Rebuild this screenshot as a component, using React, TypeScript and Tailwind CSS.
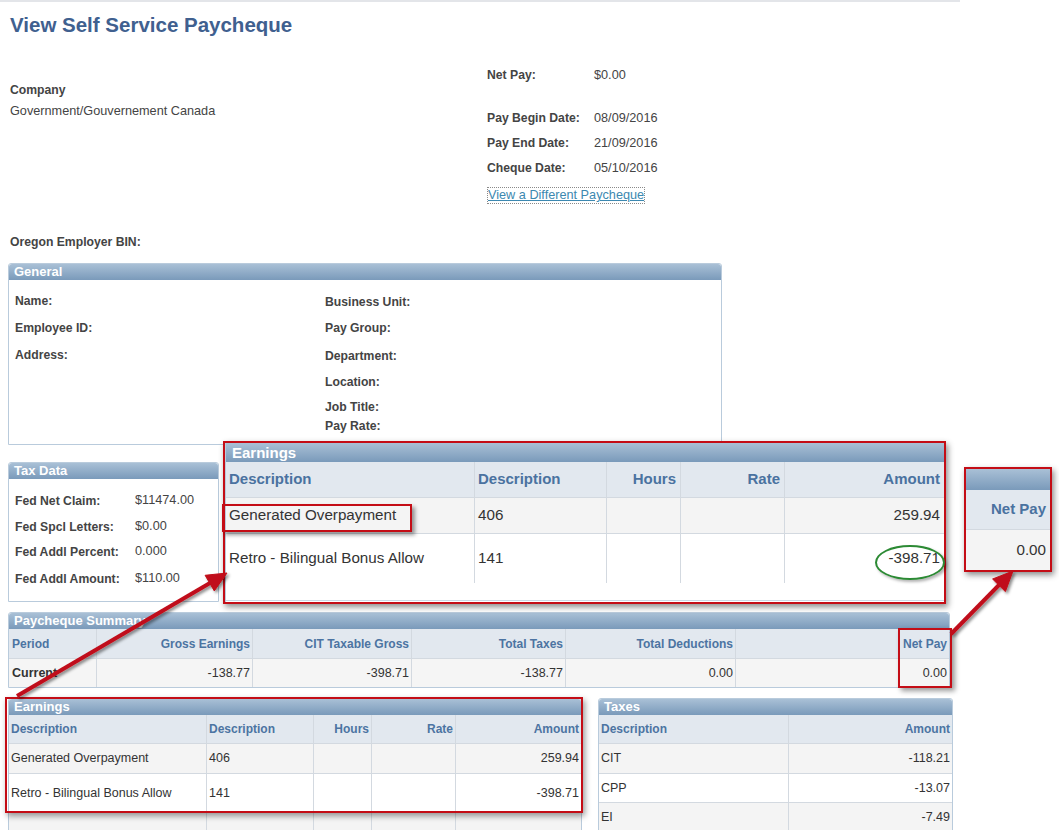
import React from "react";

type Col = { w: string; r?: boolean };

const HDR = "bg-linear-to-b from-[#a9c0d6] to-[#7a9aba] text-white font-bold";

function BoxHeader({ title }: { title: string }) {
  return (
    <div className={`h-[16px] rounded-t-[3px] pl-[5px] text-[13px] leading-[16px] ${HDR}`}>{title}</div>
  );
}

function GridRow({
  cols,
  cells,
  rowCls,
  cellCls,
  padL,
  padR,
}: {
  cols: Col[];
  cells: React.ReactNode[];
  rowCls: string;
  cellCls: string;
  padL: string;
  padR: string;
}) {
  return (
    <div className={`flex ${rowCls}`}>
      {cols.map((c, i) => (
        <div
          key={i}
          className={`flex h-full items-center whitespace-nowrap ${c.w} ${
            i < cols.length - 1 ? "border-r border-[#d3d9e0]" : ""
          } ${c.r ? `justify-end ${padR}` : padL} ${cellCls}`}
        >
          {cells[i]}
        </div>
      ))}
    </div>
  );
}

function InfoRow({ label, value, cls }: { label: string; value: string; cls?: string }) {
  return (
    <div className={`flex h-[25px] items-center ${cls ?? ""}`}>
      <div className="w-[107px] text-[12.2px] font-bold text-[#444]">{label}</div>
      <div className="text-[12.7px] text-[#444]">{value}</div>
    </div>
  );
}

function Lbl({ text, cls }: { text: string; cls: string }) {
  return <div className={`h-[18px] text-[12.2px] font-bold leading-[18px] text-[#444] ${cls}`}>{text}</div>;
}

function TaxRow({ label, value, cls }: { label: string; value: string; cls: string }) {
  return (
    <div className={`flex h-[18px] items-center ${cls}`}>
      <div className="w-[126px] pl-[6px] text-[12.2px] font-bold text-[#444]">{label}</div>
      <div className="text-[12.7px] text-[#444]">{value}</div>
    </div>
  );
}

const sumCols: Col[] = [
  { w: "w-[88px]" },
  { w: "w-[156px]", r: true },
  { w: "w-[159px]", r: true },
  { w: "w-[154px]", r: true },
  { w: "w-[170px]", r: true },
  { w: "flex-1", r: true },
];

const earnCols: Col[] = [
  { w: "w-[198px]" },
  { w: "w-[107px]" },
  { w: "w-[58px]", r: true },
  { w: "w-[84px]", r: true },
  { w: "flex-1", r: true },
];

const bigCols: Col[] = [
  { w: "w-[249px]" },
  { w: "w-[132px]" },
  { w: "w-[74px]", r: true },
  { w: "w-[104px]", r: true },
  { w: "flex-1", r: true },
];

const taxCols: Col[] = [{ w: "w-[190px]" }, { w: "flex-1", r: true }];

export default function App() {
  return (
    <div className="relative h-[830px] w-[1059px] overflow-hidden bg-white font-['Liberation_Sans',Arial,sans-serif] text-[#333]">
      <div className="h-[2px] w-[960px] bg-[#e3e5e9]" />
      <h1 className="ml-[10px] mt-[11px] h-[24px] text-[20.5px] font-bold leading-[24px] text-[#40608f]">
        View Self Service Paycheque
      </h1>

      <div className="flex">
        <div className="ml-[10px] w-[477px]">
          <div className="mt-[43px] h-[20px] text-[12.2px] font-bold leading-[20px] text-[#444]">Company</div>
          <div className="mt-[1px] h-[20px] text-[12.7px] leading-[20px] text-[#444]">
            Government/Gouvernement Canada
          </div>
        </div>
        <div>
          <InfoRow label="Net Pay:" value="$0.00" cls="mt-[26px]" />
          <InfoRow label="Pay Begin Date:" value="08/09/2016" cls="mt-[18px]" />
          <InfoRow label="Pay End Date:" value="21/09/2016" />
          <InfoRow label="Cheque Date:" value="05/10/2016" />
          <div className="mt-[2px] flex h-[25px] items-center">
            <span className="border border-dotted border-[#8a8a8a] text-[12.7px] leading-[15px] text-[#3c88b0] underline decoration-[#3c88b0]">
              View a Different Paycheque
            </span>
          </div>
        </div>
      </div>

      <div className="ml-[10px] mt-[24px] h-[20px] text-[12.2px] font-bold leading-[20px] text-[#444]">
        Oregon Employer BIN:
      </div>

      <div className="ml-[8px] mt-[11px] h-[182px] w-[714px] rounded-t-[3px] border border-[#b9cbdc]">
        <BoxHeader title="General" />
        <div className="flex">
          <div className="w-[310px] pl-[6px]">
            <Lbl text="Name:" cls="mt-[12px]" />
            <Lbl text="Employee ID:" cls="mt-[9px]" />
            <Lbl text="Address:" cls="mt-[9px]" />
          </div>
          <div className="pl-[6px]">
            <Lbl text="Business Unit:" cls="mt-[13px]" />
            <Lbl text="Pay Group:" cls="mt-[8px]" />
            <Lbl text="Department:" cls="mt-[10px]" />
            <Lbl text="Location:" cls="mt-[8px]" />
            <Lbl text="Job Title:" cls="mt-[7px]" />
            <Lbl text="Pay Rate:" cls="mt-[1px]" />
          </div>
        </div>
      </div>

      <div className="ml-[8px] mt-[17px] h-[140px] w-[211px] rounded-t-[3px] border border-[#b9cbdc]">
        <BoxHeader title="Tax Data" />
        <TaxRow label="Fed Net Claim:" value="$11474.00" cls="mt-[13px]" />
        <TaxRow label="Fed Spcl Letters:" value="$0.00" cls="mt-[8px]" />
        <TaxRow label="Fed Addl Percent:" value="0.000" cls="mt-[7px]" />
        <TaxRow label="Fed Addl Amount:" value="$110.00" cls="mt-[9px]" />
      </div>

      <div className="ml-[8px] mt-[10px] w-[942px] rounded-t-[3px] border border-[#b9cbdc]">
        <BoxHeader title="Paycheque Summary" />
        <GridRow
          cols={sumCols}
          cells={["Period", "Gross Earnings", "CIT Taxable Gross", "Total Taxes", "Total Deductions", "Net Pay"]}
          rowCls="h-[30px] border-b border-[#d3d9e0] bg-[#e2e8ef]"
          cellCls="text-[12px] font-bold text-[#4c74a2]"
          padL="pl-[3px]"
          padR="pr-[2px]"
        />
        <GridRow
          cols={sumCols}
          cells={[
            <span className="font-bold">Current</span>,
            "-138.77",
            "-398.71",
            "-138.77",
            "0.00",
            "0.00",
          ]}
          rowCls="h-[28px] bg-[#f5f5f5]"
          cellCls="text-[12.5px] text-[#333]"
          padL="pl-[3px]"
          padR="pr-[2px]"
        />
      </div>

      <div className="mt-[10px] flex items-start">
        <div className="ml-[8px] w-[574px] rounded-t-[3px] border border-[#b9cbdc]">
          <BoxHeader title="Earnings" />
          <GridRow
            cols={earnCols}
            cells={["Description", "Description", "Hours", "Rate", "Amount"]}
            rowCls="h-[29px] border-b border-[#d3d9e0] bg-[#e2e8ef]"
            cellCls="text-[12px] font-bold text-[#4c74a2]"
            padL="pl-[2px]"
            padR="pr-[2px]"
          />
          <GridRow
            cols={earnCols}
            cells={["Generated Overpayment", "406", "", "", "259.94"]}
            rowCls="h-[30px] border-b border-[#d3d9e0] bg-[#f4f4f4]"
            cellCls="text-[12.5px] text-[#333]"
            padL="pl-[2px]"
            padR="pr-[2px]"
          />
          <GridRow
            cols={earnCols}
            cells={["Retro - Bilingual Bonus Allow", "141", "", "", "-398.71"]}
            rowCls="h-[39px] border-b border-[#d3d9e0] bg-white"
            cellCls="text-[12.5px] text-[#333]"
            padL="pl-[2px]"
            padR="pr-[2px]"
          />
          <GridRow
            cols={earnCols}
            cells={["", "", "", "", ""]}
            rowCls="h-[30px] bg-[#f4f4f4]"
            cellCls="text-[12.5px]"
            padL="pl-[2px]"
            padR="pr-[2px]"
          />
        </div>

        <div className="ml-[16px] w-[355px] rounded-t-[3px] border border-[#b9cbdc]">
          <BoxHeader title="Taxes" />
          <GridRow
            cols={taxCols}
            cells={["Description", "Amount"]}
            rowCls="h-[29px] border-b border-[#d3d9e0] bg-[#e2e8ef]"
            cellCls="text-[12px] font-bold text-[#4c74a2]"
            padL="pl-[2px]"
            padR="pr-[2px]"
          />
          <GridRow
            cols={taxCols}
            cells={["CIT", "-118.21"]}
            rowCls="h-[30px] border-b border-[#d3d9e0] bg-[#f4f4f4]"
            cellCls="text-[12.5px] text-[#333]"
            padL="pl-[2px]"
            padR="pr-[2px]"
          />
          <GridRow
            cols={taxCols}
            cells={["CPP", "-13.07"]}
            rowCls="h-[29px] border-b border-[#d3d9e0] bg-white"
            cellCls="text-[12.5px] text-[#333]"
            padL="pl-[2px]"
            padR="pr-[2px]"
          />
          <GridRow
            cols={taxCols}
            cells={["EI", "-7.49"]}
            rowCls="h-[29px] border-b border-[#d3d9e0] bg-[#f4f4f4]"
            cellCls="text-[12.5px] text-[#333]"
            padL="pl-[2px]"
            padR="pr-[2px]"
          />
        </div>
      </div>

      {/* Annotation: enlarged earnings */}
      <div className="absolute left-[223px] top-[441px] h-[163px] w-[723px] border-2 border-[#c40d16] bg-white shadow-[2px_3px_6px_rgba(0,0,0,0.45)]">
        <div className="h-full border-l border-[#b9cbdc]">
          <div className={`h-[19px] pl-[6px] text-[15px] leading-[19px] ${HDR}`}>Earnings</div>
          <GridRow
            cols={bigCols}
            cells={["Description", "Description", "Hours", "Rate", "Amount"]}
            rowCls="h-[36px] border-b border-[#d3d9e0] bg-[#e2e8ef]"
            cellCls="text-[15px] font-bold text-[#4a72a0]"
            padL="pl-[3px]"
            padR="pr-[4px]"
          />
          <GridRow
            cols={bigCols}
            cells={["Generated Overpayment", "406", "", "", "259.94"]}
            rowCls="h-[36px] border-b border-[#d3d9e0] bg-[#f4f4f4]"
            cellCls="text-[15.2px] text-[#333]"
            padL="pl-[3px]"
            padR="pr-[4px]"
          />
          <GridRow
            cols={bigCols}
            cells={["Retro - Bilingual Bonus Allow", "141", "", "", "-398.71"]}
            rowCls="h-[49px] bg-white"
            cellCls="text-[15.2px] text-[#333]"
            padL="pl-[3px]"
            padR="pr-[4px]"
          />
          <div className="h-[18px] border-b border-[#cbd9e6]" />
        </div>
      </div>

      <div className="absolute left-[222px] top-[504px] h-[28px] w-[190px] border-2 border-[#c40d16] shadow-[3px_3px_4px_rgba(0,0,0,0.4)]" />
      <div className="absolute left-[875px] top-[545px] h-[35px] w-[70px] rounded-[50%] border-2 border-[#2c8a34] shadow-[2px_2px_3px_rgba(0,0,0,0.3)]" />

      {/* Annotation: Net Pay callout */}
      <div className="absolute left-[964px] top-[467px] h-[105px] w-[88px] border-2 border-[#c40d16] bg-white shadow-[2px_3px_6px_rgba(0,0,0,0.45)]">
        <div className={`h-[21px] ${HDR}`} />
        <div className="flex h-[40px] items-center justify-end border-b border-[#d3d9e0] bg-[#e2e8ef] pr-[4px] text-[15px] font-bold text-[#4a72a0]">
          Net Pay
        </div>
        <div className="flex h-[40px] items-center justify-end bg-[#f4f4f4] pr-[4px] text-[15.2px] text-[#333]">
          0.00
        </div>
      </div>

      <div className="absolute left-[898px] top-[628px] h-[60px] w-[54px] border-2 border-[#c40d16] shadow-[3px_3px_5px_rgba(0,0,0,0.4)]" />
      <div className="absolute left-[5px] top-[697px] h-[116px] w-[578px] border-2 border-[#c40d16] shadow-[2px_3px_6px_rgba(0,0,0,0.4)]" />

      <svg className="pointer-events-none absolute left-0 top-0" width="1059" height="830" viewBox="0 0 1059 830">
        <defs>
          <filter id="ash" x="-20%" y="-20%" width="140%" height="140%">
            <feDropShadow dx="2" dy="2" stdDeviation="1.6" floodColor="#000" floodOpacity="0.45" />
          </filter>
        </defs>
        <g filter="url(#ash)" fill="#c0101a" stroke="#c0101a">
          <line x1="17" y1="696" x2="210" y2="583" strokeWidth="4" />
          <polygon points="227,573 214.3,590.9 205.1,575.3" strokeWidth="1" />
          <line x1="951" y1="634" x2="999" y2="585" strokeWidth="4" />
          <polygon points="1013,571 1005.4,591.6 992.6,579" strokeWidth="1" />
        </g>
      </svg>
    </div>
  );
}
